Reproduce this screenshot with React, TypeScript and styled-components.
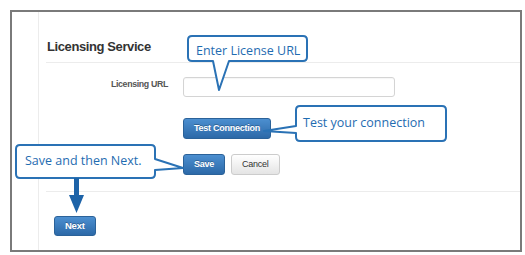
import React from "react";
import styled, { createGlobalStyle } from "styled-components";

const GlobalStyle = createGlobalStyle`
  html, body { margin: 0; padding: 0; background: #ffffff; }
  body { font-family: "Liberation Sans", Arial, sans-serif; }
`;

const Frame = styled.div`
  position: relative;
  margin: 10px;
  width: 512px;
  height: 242px;
  box-sizing: border-box;
  border: 2px solid #7a7a7a;
  background: #ffffff;
  display: flex;
`;

const Gutter = styled.div`
  flex: none;
  width: 26px;
  border-right: 1px solid #ececec;
`;

const Content = styled.div`
  flex: 1;
  padding-left: 7px;
  display: flex;
  flex-direction: column;
  align-items: flex-start;
`;

const Heading = styled.h2`
  margin: 27px 0 7px 1px;
  font-size: 13px;
  line-height: 16px;
  font-weight: bold;
  letter-spacing: -0.4px;
  color: #333333;
`;

const Divider = styled.div<{ $mt?: number }>`
  align-self: stretch;
  height: 1px;
  background: #ececec;
  margin-top: ${(p) => p.$mt ?? 0}px;
`;

const Form = styled.div`
  display: grid;
  grid-template-columns: 122px auto;
  column-gap: 15px;
  margin-top: 14px;
`;

const Label = styled.label`
  grid-column: 1;
  text-align: right;
  padding-top: 2px;
  font-size: 8.8px;
  line-height: 10px;
  font-weight: bold;
  letter-spacing: -0.35px;
  color: #555555;
`;

const Input = styled.input`
  grid-column: 2;
  width: 212px;
  height: 20px;
  box-sizing: border-box;
  border: 1px solid #d4d4d4;
  border-radius: 3px;
  box-shadow: inset 0 1px 1px rgba(0, 0, 0, 0.04);
  margin: 0;
  padding: 0 6px;
`;

const ButtonRow = styled.div<{ $mt: number }>`
  grid-column: 2;
  display: flex;
  gap: 6px;
  margin-top: ${(p) => p.$mt}px;
`;

const Button = styled.button<{ $variant?: "primary" | "default"; $h?: number }>`
  height: ${(p) => p.$h ?? 21}px;
  box-sizing: border-box;
  padding: 0 10px;
  margin: 0;
  border-radius: 3px;
  font-family: "Liberation Sans", Arial, sans-serif;
  font-size: 9px;
  letter-spacing: -0.25px;
  line-height: 1;
  cursor: pointer;
  ${(p) =>
    p.$variant === "default"
      ? `
    font-weight: normal;
    color: #333333;
    border: 1px solid #cccccc;
    background: linear-gradient(#ffffff, #e4e4e4);
  `
      : `
    font-weight: bold;
    color: #ffffff;
    border: 1px solid #2b6299;
    background: linear-gradient(#4c8fd0, #2c69a8);
    text-shadow: 0 -1px 0 rgba(0, 0, 0, 0.25);
  `}
`;

const NextButton = styled(Button)`
  margin-top: 24px;
  margin-left: 8px;
  font-size: 9.5px;
`;

const CalloutBox = styled.div<{
  $x: number;
  $y: number;
  $w: number;
  $h: number;
  $pt: number;
  $pl: number;
}>`
  position: absolute;
  left: ${(p) => p.$x}px;
  top: ${(p) => p.$y}px;
  width: ${(p) => p.$w}px;
  height: ${(p) => p.$h}px;
  box-sizing: border-box;
  padding: ${(p) => p.$pt}px 0 0 ${(p) => p.$pl}px;
`;

const CalloutShape = styled.svg`
  position: absolute;
  left: 0;
  top: 0;
  overflow: visible;
`;

const CalloutText = styled.span`
  position: relative;
  display: block;
  white-space: nowrap;
  font-family: "Open Sans", "Noto Sans", sans-serif;
  font-size: 12.5px;
  line-height: 14px;
  color: #1f6cb1;
`;

const DownArrow = styled.svg`
  position: absolute;
  left: 57px;
  top: 166px;
  overflow: visible;
`;

type Pointer = {
  side: "bottom" | "left" | "right";
  a: number;
  b: number;
  tx: number;
  ty: number;
};

function calloutPath(w: number, h: number, ptr: Pointer) {
  const r = 4;
  const L = 1;
  const T = 1;
  const R = w - 1;
  const B = h - 1;
  let d = `M ${L + r} ${T} H ${R - r} Q ${R} ${T} ${R} ${T + r} `;
  if (ptr.side === "right") {
    d += `V ${ptr.a} L ${ptr.tx} ${ptr.ty} L ${R} ${ptr.b} `;
  }
  d += `V ${B - r} Q ${R} ${B} ${R - r} ${B} `;
  if (ptr.side === "bottom") {
    d += `H ${ptr.b} L ${ptr.tx} ${ptr.ty} L ${ptr.a} ${B} `;
  }
  d += `H ${L + r} Q ${L} ${B} ${L} ${B - r} `;
  if (ptr.side === "left") {
    d += `V ${ptr.b} L ${ptr.tx} ${ptr.ty} L ${L} ${ptr.a} `;
  }
  d += `V ${T + r} Q ${L} ${T} ${L + r} ${T} Z`;
  return d;
}

type CalloutProps = {
  x: number;
  y: number;
  w: number;
  h: number;
  pt: number;
  pl: number;
  pointer: Pointer;
  children: React.ReactNode;
};

function Callout({ x, y, w, h, pt, pl, pointer, children }: CalloutProps) {
  return (
    <CalloutBox $x={x} $y={y} $w={w} $h={h} $pt={pt} $pl={pl}>
      <CalloutShape width={w} height={h}>
        <path
          d={calloutPath(w, h, pointer)}
          fill="#ffffff"
          stroke="#2a72b5"
          strokeWidth={2}
          strokeLinejoin="round"
        />
      </CalloutShape>
      <CalloutText>{children}</CalloutText>
    </CalloutBox>
  );
}

export default function App() {
  return (
    <>
      <GlobalStyle />
      <Frame>
        <Gutter />
        <Content>
          <Heading>Licensing Service</Heading>
          <Divider />
          <Form>
            <Label htmlFor="licensing-url">Licensing URL</Label>
            <Input id="licensing-url" type="text" />
            <ButtonRow $mt={21}>
              <Button $variant="primary">Test Connection</Button>
            </ButtonRow>
            <ButtonRow $mt={15}>
              <Button $variant="primary">Save</Button>
              <Button $variant="default">Cancel</Button>
            </ButtonRow>
          </Form>
          <Divider $mt={16} />
          <NextButton $variant="primary" $h={20}>
            Next
          </NextButton>
        </Content>

        <Callout
          x={175}
          y={23}
          w={121}
          h={27}
          pt={9}
          pl={9}
          pointer={{ side: "bottom", a: 26, b: 42, tx: 32, ty: 55 }}
        >
          Enter License URL
        </Callout>
        <Callout
          x={283}
          y={93}
          w={152}
          h={37}
          pt={11}
          pl={8}
          pointer={{ side: "left", a: 21, b: 28, tx: -31, ty: 26 }}
        >
          Test your connection
        </Callout>
        <Callout
          x={3}
          y={132}
          w={141}
          h={35}
          pt={10}
          pl={10}
          pointer={{ side: "right", a: 15, b: 26, tx: 168, ty: 24 }}
        >
          Save and then Next.
        </Callout>
        <DownArrow width={15} height={35} viewBox="0 0 15 35">
          <rect x={5} y={0} width={5} height={18} fill="#1d63a8" />
          <path d="M 0 17 L 15 17 L 7.5 35 Z" fill="#1d63a8" />
        </DownArrow>
      </Frame>
    </>
  );
}
